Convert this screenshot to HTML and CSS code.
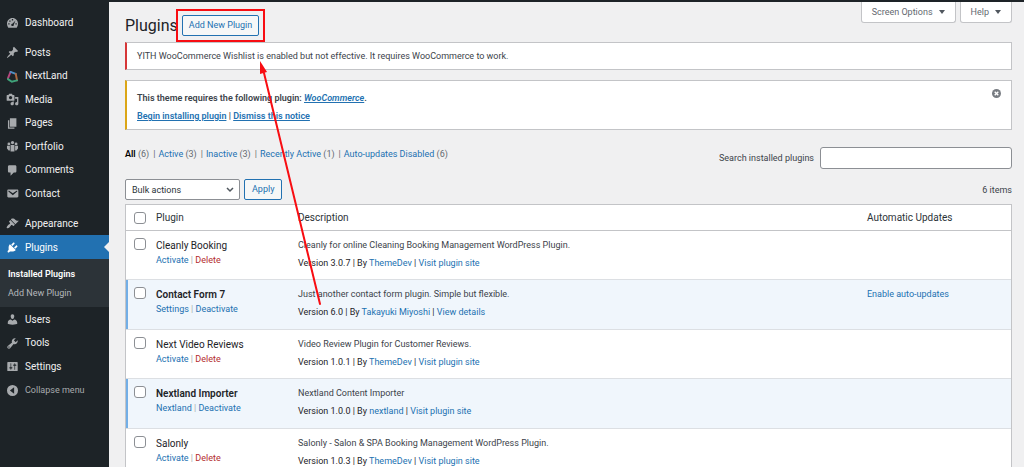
FILE: index.html
```html
<!DOCTYPE html>
<html lang="en">
<head>
<meta charset="utf-8">
<title>Plugins</title>
<link rel="stylesheet" href="styles.css">
</head>
<body>
<div class="topbar"></div>
<div class="shell">
  <nav class="sidebar" aria-label="Main menu">
    <ul class="menu">
      <li><a class="menu-link" href="#"><svg class="icon" viewBox="0 0 20 20"><path fill-rule="evenodd" d="M3.500 18h13c1.300-1.800 2-3.800 2-5.900C18.500 7 14.700 3 10 3s-8.500 4-8.500 9.100c0 2.100.7 4.100 2 5.900zM9 4.800h2v2H9zM5 6.800h2v2H5zM3.500 11h2v2h-2zM14.500 11h2v2h-2zM14.600 6.800l-2.600 6.600c.2 1.200-.6 2.100-1.900 2.100s-2.200-.8-2.100-1.900c.1-.9.800-1.500 1.900-1.600z"/></svg>Dashboard</a></li>
    </ul>
    <ul class="menu">
      <li><a class="menu-link" href="#"><svg class="icon" viewBox="0 0 20 20"><path d="M10.440 3.020l1.820-1.820 6.360 6.350-1.830 1.820c-1.050-.68-2.480-.57-3.410.36l-.75.75c-.92.93-1.040 2.350-.35 3.410l-1.830 1.820-2.410-2.410-2.800 2.790c-.42.42-3.380 2.710-3.800 2.290s1.860-3.390 2.280-3.810l2.790-2.790L4.100 9.360l1.830-1.820c1.050.69 2.480.57 3.400-.36l.75-.75c.93-.92 1.050-2.350.36-3.410z"/></svg>Posts</a></li>
      <li><a class="menu-link" href="#"><svg class="icon" viewBox="0 0 20 20" stroke-width="3" stroke-linecap="round"><path fill="none" stroke="#b5467c" d="M7 3L3 13"/><path fill="none" stroke="#4e8fc4" d="M7 3l8 3"/><path fill="none" stroke="#b0683f" d="M15 6l2 10"/><path fill="none" stroke="#3fa37a" d="M3 14l6 4 8-2"/></svg>NextLand</a></li>
      <li><a class="menu-link" href="#"><svg class="icon" viewBox="0 0 20 20"><path fill-rule="evenodd" d="M13 11V4c0-.55-.45-1-1-1h-1.670L9 1H5L3.670 3H2c-.55 0-1 .45-1 1v7c0 .55.45 1 1 1h10c.55 0 1-.45 1-1zM7 4.500c1.380 0 2.500 1.120 2.500 2.500S8.380 9.500 7 9.500 4.500 8.380 4.500 7 5.620 4.500 7 4.500zM14 6h5v10.500c0 1.380-1.120 2.500-2.500 2.500S14 17.880 14 16.500s1.120-2.500 2.500-2.500c.17 0 .34.02.5.05V9h-3V6zm-4 8.050V13h2v3.500c0 1.380-1.120 2.500-2.500 2.500S7 17.880 7 16.500 8.120 14 9.500 14c.17 0 .34.02.5.05z"/></svg>Media</a></li>
      <li><a class="menu-link" href="#"><svg class="icon" viewBox="0 0 20 20"><path d="M6 15V2h10v13H6zm-1 1h8v2H3V5h2v11z"/></svg>Pages</a></li>
      <li><a class="menu-link" href="#"><svg class="icon" viewBox="0 0 20 20"><circle cx="10" cy="4" r="2.500"/><circle cx="4.500" cy="6" r="2.200"/><circle cx="15.500" cy="6" r="2.200"/><path d="M7 7.500h6v10H7zM1.500 9H6v7H4l-2.500-3zM14 9h4.500v4L16 16h-2z"/></svg>Portfolio</a></li>
      <li><a class="menu-link" href="#"><svg class="icon" viewBox="0 0 20 20"><path d="M5 2h9c1.100 0 2 .9 2 2v7c0 1.100-.9 2-2 2h-2l-5 5v-5H5c-1.100 0-2-.9-2-2V4c0-1.100.9-2 2-2z"/></svg>Comments</a></li>
      <li><a class="menu-link" href="#"><svg class="icon" viewBox="0 0 20 20"><path fill-rule="evenodd" d="M3.870 4h13.250C18.370 4 19 4.590 19 5.790v8.420c0 1.190-.63 1.790-1.880 1.790H3.870c-1.250 0-1.880-.6-1.880-1.790V5.790c0-1.200.63-1.790 1.880-1.790zm6.620 8.600l6.740-5.530c.24-.2.43-.66.13-1.070-.29-.41-.82-.42-1.170-.17l-5.700 3.860L4.800 5.830c-.35-.25-.88-.24-1.170.17-.3.41-.11.87.13 1.070z"/></svg>Contact</a></li>
    </ul>
    <ul class="menu menu-even">
      <li><a class="menu-link" href="#"><svg class="icon" viewBox="0 0 20 20"><path d="M14.480 11.060L7.410 3.990l1.500-1.500c.5-.56 2.300-.47 3.510.32 1.210.8 1.430 1.280 2.910 2.100 1.180.64 2.450 1.260 4.450.85zm-.71.71L6.700 4.700 4.930 6.470c-.39.39-.39 1.020 0 1.410l1.060 1.060c.39.39.39 1.030 0 1.420-.6.6-1.430 1.110-2.210 1.690-.35.26-.7.53-1.010.84C1.430 14.230.4 16.080 1.400 17.070c.99 1 2.840-.03 4.180-1.360.31-.31.58-.66.85-1.020.57-.78 1.080-1.610 1.690-2.210.39-.39 1.020-.39 1.410 0l1.060 1.060c.39.39 1.020.39 1.410 0z"/></svg>Appearance</a></li>
      <li><a class="menu-link current" href="#"><svg class="icon" viewBox="0 0 20 20"><path d="M13.110 4.360L9.870 7.600 8 5.730l3.240-3.240c.35-.34 1.050-.2 1.560.32.52.51.66 1.210.31 1.550zm-8 1.770l.91-1.120 9.010 9.010-1.190.84c-.71.71-2.630 1.160-3.820 1.160H6.140L4.900 17.260c-.59.59-1.540.59-2.120 0-.59-.58-.59-1.530 0-2.120l1.240-1.240v-3.880c0-1.130.4-3.190 1.090-3.890zm7.260 3.970l3.240-3.240c.34-.35 1.040-.21 1.550.31.52.51.66 1.210.31 1.550l-3.240 3.250z"/></svg>Plugins</a></li>
    </ul>
    <ul class="submenu">
      <li><a class="sub-link selected" href="#">Installed Plugins</a></li>
      <li><a class="sub-link" href="#">Add New Plugin</a></li>
    </ul>
    <ul class="menu">
      <li><a class="menu-link" href="#"><svg class="icon" viewBox="0 0 20 20"><path d="M10 9.250c-2.270 0-2.730-3.440-2.730-3.440C7 4.020 7.820 2 9.970 2c2.160 0 2.980 2.020 2.710 3.810 0 0-.41 3.440-2.680 3.440zm0 2.570L12.720 10c2.390 0 4.520 2.330 4.520 4.530v2.490s-3.650 1.130-7.240 1.130c-3.650 0-7.240-1.130-7.240-1.130v-2.490c0-2.250 1.940-4.480 4.470-4.480z"/></svg>Users</a></li>
      <li><a class="menu-link" href="#"><svg class="icon" viewBox="0 0 20 20"><path fill-rule="evenodd" d="M16.680 9.770c-1.340 1.340-3.300 1.670-4.950.99l-5.410 6.520c-.99.99-2.590.99-3.580 0s-.99-2.590 0-3.570l6.520-5.420c-.68-1.650-.35-3.610.99-4.950 1.280-1.280 3.120-1.620 4.720-1.060l-2.890 2.890 2.820 2.820 2.860-2.870c.53 1.580.18 3.390-1.080 4.650zM3.810 16.210c.4.39 1.040.39 1.430 0 .4-.4.4-1.040 0-1.430-.39-.4-1.030-.4-1.430 0-.39.39-.39 1.030 0 1.430z"/></svg>Tools</a></li>
      <li><a class="menu-link" href="#"><svg class="icon" viewBox="0 0 20 20"><path fill-rule="evenodd" d="M18 16V4c0-.55-.45-1-1-1H3c-.55 0-1 .45-1 1v12c0 .55.45 1 1 1h14c.55 0 1-.45 1-1zM8 11h1c.55 0 1 .45 1 1s-.45 1-1 1H8v1.500c0 .28-.22.5-.5.5s-.5-.22-.5-.5V13H6c-.55 0-1-.45-1-1s.45-1 1-1h1V5.500c0-.28.22-.5.5-.5s.5.22.5.5V11zm5-2h-1c-.55 0-1-.45-1-1s.45-1 1-1h1V5.500c0-.28.22-.5.5-.5s.5.22.5.5V7h1c.55 0 1 .45 1 1s-.45 1-1 1h-1v5.500c0 .28-.22.5-.5.5s-.5-.22-.5-.5V9z"/></svg>Settings</a></li>
      <li><button class="menu-link collapse" type="button"><svg class="icon" viewBox="0 0 20 20"><path fill-rule="evenodd" d="M10 1.500a8.500 8.500 0 1 0 0 17 8.500 8.500 0 0 0 0-17zM12.500 5v10L6 10z"/></svg>Collapse menu</button></li>
    </ul>
  </nav>

  <main class="content">
    <header class="page-head">
      <h1 class="title">Plugins</h1>
      <div class="callout"><a class="btn" href="#">Add New Plugin</a></div>
      <div class="screen-meta">
        <button class="meta-btn" type="button">Screen Options <span class="caret"></span></button>
        <button class="meta-btn" type="button">Help <span class="caret"></span></button>
      </div>
    </header>

    <section class="notice error"><p>YITH WooCommerce Wishlist is enabled but not effective. It requires WooCommerce to work.</p></section>
    <section class="notice warning">
      <div>
        <p>This theme requires the following plugin: <em><a href="#">WooCommerce</a></em>.</p>
        <p><a href="#">Begin installing plugin</a> | <a href="#">Dismiss this notice</a></p>
      </div>
      <button class="dismiss" type="button" aria-label="Dismiss"><svg viewBox="0 0 20 20"><circle cx="10" cy="10" r="10" fill="#787c82"/><path d="M6 6l8 8M14 6l-8 8" stroke="#fff" stroke-width="3"/></svg></button>
    </section>

    <div class="filters">
      <ul class="views">
        <li><a class="on" href="#">All</a> (6)</li>
        <li><a href="#">Active</a> (3)</li>
        <li><a href="#">Inactive</a> (3)</li>
        <li><a href="#">Recently Active</a> (1)</li>
        <li><a href="#">Auto-updates Disabled</a> (6)</li>
      </ul>
      <div class="search">
        <label for="search">Search installed plugins</label>
        <input id="search" type="search">
      </div>
    </div>

    <div class="actions">
      <select class="bulk" aria-label="Bulk actions"><option>Bulk actions</option></select>
      <button class="btn apply" type="button">Apply</button>
      <span class="count">6 items</span>
    </div>

    <table class="plugins">
      <thead>
        <tr><th class="c-check"><input type="checkbox" aria-label="Select all"></th><th class="c-name">Plugin</th><th>Description</th><th class="c-auto">Automatic Updates</th></tr>
      </thead>
      <tbody>
        <tr>
          <td class="c-check"><input type="checkbox" aria-label="Select Cleanly Booking"></td>
          <td><span class="name">Cleanly Booking</span><div class="row-actions"><a href="#">Activate</a> | <a class="delete" href="#">Delete</a></div></td>
          <td><p>Cleanly for online Cleaning Booking Management WordPress Plugin.</p><div class="meta">Version 3.0.7 | By <a href="#">ThemeDev</a> | <a href="#">Visit plugin site</a></div></td>
          <td></td>
        </tr>
        <tr class="active">
          <td class="c-check"><input type="checkbox" aria-label="Select Contact Form 7"></td>
          <td><strong class="name">Contact Form 7</strong><div class="row-actions"><a href="#">Settings</a> | <a href="#">Deactivate</a></div></td>
          <td><p>Just another contact form plugin. Simple but flexible.</p><div class="meta">Version 6.0 | By <a href="#">Takayuki Miyoshi</a> | <a href="#">View details</a></div></td>
          <td><a href="#">Enable auto-updates</a></td>
        </tr>
        <tr>
          <td class="c-check"><input type="checkbox" aria-label="Select Next Video Reviews"></td>
          <td><span class="name">Next Video Reviews</span><div class="row-actions"><a href="#">Activate</a> | <a class="delete" href="#">Delete</a></div></td>
          <td><p>Video Review Plugin for Customer Reviews.</p><div class="meta">Version 1.0.1 | By <a href="#">ThemeDev</a> | <a href="#">Visit plugin site</a></div></td>
          <td></td>
        </tr>
        <tr class="active">
          <td class="c-check"><input type="checkbox" aria-label="Select Nextland Importer"></td>
          <td><strong class="name">Nextland Importer</strong><div class="row-actions"><a href="#">Nextland</a> | <a href="#">Deactivate</a></div></td>
          <td><p>Nextland Content Importer</p><div class="meta">Version 1.0.0 | By <a href="#">nextland</a> | <a href="#">Visit plugin site</a></div></td>
          <td></td>
        </tr>
        <tr>
          <td class="c-check"><input type="checkbox" aria-label="Select Salonly"></td>
          <td><span class="name">Salonly</span><div class="row-actions"><a href="#">Activate</a> | <a class="delete" href="#">Delete</a></div></td>
          <td><p>Salonly - Salon &amp; SPA Booking Management WordPress Plugin.</p><div class="meta">Version 1.0.3 | By <a href="#">ThemeDev</a> | <a href="#">Visit plugin site</a></div></td>
          <td></td>
        </tr>
      </tbody>
    </table>
  </main>
</div>
<svg class="arrow" viewBox="0 0 64 246" aria-hidden="true"><path d="M61 243L5 12" stroke="#f80d12" stroke-width="2" stroke-linecap="round"/><path d="M1 0l7 11-7 2z" fill="#f80d12" stroke="none"/></svg>
</body>
</html>
```
FILE: styles.css
```css
* { box-sizing: border-box; }
body {
  margin: 0;
  height: 100vh;
  overflow: hidden;
  display: flex;
  flex-direction: column;
  background: #f0f0f1;
  color: #3c434a;
  font: 9px/14px Roboto, "Open Sans", sans-serif;
}
ul, p, h1 { margin: 0; padding: 0; list-style: none; }
a { color: #2271b1; text-decoration: none; }
button, input, select { font: inherit; }

.topbar { flex: none; height: 2px; background: #1d2327; }
.shell { flex: 1; min-height: 0; display: flex; }

.sidebar {
  flex: none;
  width: 109px;
  padding-top: 8px;
  background: #1d2327;
}
.menu + .menu { margin-top: 6px; }
.menu-link {
  position: relative;
  display: flex;
  align-items: center;
  gap: 6px;
  width: 100%;
  height: 24px;
  padding: 1px 0 0 6px;
  border: 0;
  background: none;
  color: #f0f0f1;
  font-size: 10px;
}
.menu:not(.menu-even) li:nth-child(even) .menu-link { height: 23px; }
.icon { flex: none; width: 13px; height: 13px; fill: #a7aaad; }
.menu-link.current { background: #2271b1; color: #fff; }
.current .icon { fill: #fff; }
.current::after {
  content: "";
  position: absolute;
  right: 0;
  top: 7px;
  border: 5px solid transparent;
  border-left-width: 0;
  border-right-color: #f0f0f1;
}
.menu-link.collapse { color: #a7aaad; font-size: 9px; }
.submenu { padding: 6px 8px 4px; background: #2c3338; }
.sub-link { display: block; line-height: 19px; color: #b4b8bc; }
.sub-link.selected { color: #fff; font-weight: 600; }

.content { flex: 1; min-width: 0; padding: 0 12px 0 16px; }

.page-head { display: flex; height: 40px; }
.title {
  align-self: center;
  margin: 8px 0 0;
  color: #1d2327;
  font-size: 16px;
  font-weight: 400;
  line-height: 24px;
}
.callout {
  align-self: flex-end;
  margin-left: -2px;
  padding: 4px;
  border: 2px solid #f80d12;
}
.btn {
  display: block;
  height: 21px;
  padding: 0 6px;
  border: 1px solid #2271b1;
  border-radius: 2px;
  background: #f6f7f7;
  color: #2271b1;
  line-height: 19px;
}
.apply { padding: 0 7px; }
.screen-meta { display: flex; align-items: flex-start; gap: 4px; margin-left: auto; }
.meta-btn {
  display: flex;
  align-items: center;
  gap: 6px;
  height: 21px;
  padding: 0 10px;
  border: 1px solid #c3c4c7;
  border-top: 0;
  border-radius: 0 0 3px 3px;
  background: #fff;
  color: #646970;
}
.caret { border: 3px solid transparent; border-top: 4px solid #50575e; border-bottom: 0; }

.notice {
  display: flex;
  justify-content: space-between;
  margin-bottom: 10px;
  padding: 6px 10px;
  border: 1px solid #c3c4c7;
  border-left-width: 2px;
  background: #fff;
}
.error { border-left-color: #d63638; }
.warning { padding-top: 8px; padding-bottom: 4px; border-left-color: #dba617; font-weight: 600; }
.warning p { line-height: 18px; }
.warning a { text-decoration: underline; }
.dismiss { align-self: flex-start; width: 9px; height: 9px; padding: 0; border: 0; background: none; }
.dismiss svg { display: block; }

.filters { display: flex; justify-content: space-between; margin-top: 17px; }
.views { display: flex; color: #646970; }
.views li + li::before { content: "|"; margin: 0 3px 0 4px; }
.views .on { color: #000; font-weight: 600; }
.search { display: flex; align-items: center; gap: 6px; }
.search input {
  width: 192px;
  height: 22px;
  border: 1px solid #8c8f94;
  border-radius: 3px;
  background: #fff;
}

.actions { display: flex; align-items: center; gap: 4px; margin: 10px 0 4px; }
.bulk {
  appearance: none;
  width: 115px;
  height: 21px;
  padding: 0 6px;
  border: 1px solid #8c8f94;
  border-radius: 2px;
  color: #2c3338;
  font-size: 9px;
  background: #fff url("data:image/svg+xml,%3Csvg xmlns='http://www.w3.org/2000/svg' viewBox='0 0 8 6'%3E%3Cpath d='M1 1l3 3 3-3' fill='none' stroke='%2350575e' stroke-width='1.500'/%3E%3C/svg%3E") no-repeat right 5px center / 8px 6px;
}
.count { margin-left: auto; }

.plugins {
  width: 100%;
  table-layout: fixed;
  border-collapse: separate;
  border-spacing: 0;
  border: 1px solid #c3c4c7;
  background: #fff;
}
.plugins th {
  height: 26px;
  padding: 0;
  border-bottom: 1px solid #c3c4c7;
  color: #2c3338;
  font-size: 10px;
  font-weight: 400;
  text-align: left;
}
.plugins td { height: 50px; padding: 7px 0 0; border-bottom: 1px solid #dcdfe3; vertical-align: top; }
.plugins tbody tr:nth-child(odd) td { height: 49px; }
.c-check { width: 30px; }
.c-name { width: 142px; }
.c-auto { width: 144px; }
.plugins .c-check { padding-left: 8px; }
.plugins input {
  appearance: none;
  display: block;
  width: 12px;
  height: 12px;
  margin: 0;
  border: 1px solid #8c8f94;
  border-radius: 3px;
  background: #fff;
}
.active td { background: #f0f6fc; }
.active .c-check { box-shadow: inset 2px 0 #72aee6; }
.name { display: block; color: #1d2327; font-size: 10px; font-weight: 400; line-height: 15px; }
strong.name { font-weight: 600; }
.row-actions { color: #a7aaad; }
.delete { color: #b32d2e; }
.meta { margin-top: 4px; color: #1d2327; }

/* Annotation arrow floating over the page */
.arrow { position: absolute; left: 259px; top: 61px; width: 64px; height: 246px; fill: none; pointer-events: none; }
```
